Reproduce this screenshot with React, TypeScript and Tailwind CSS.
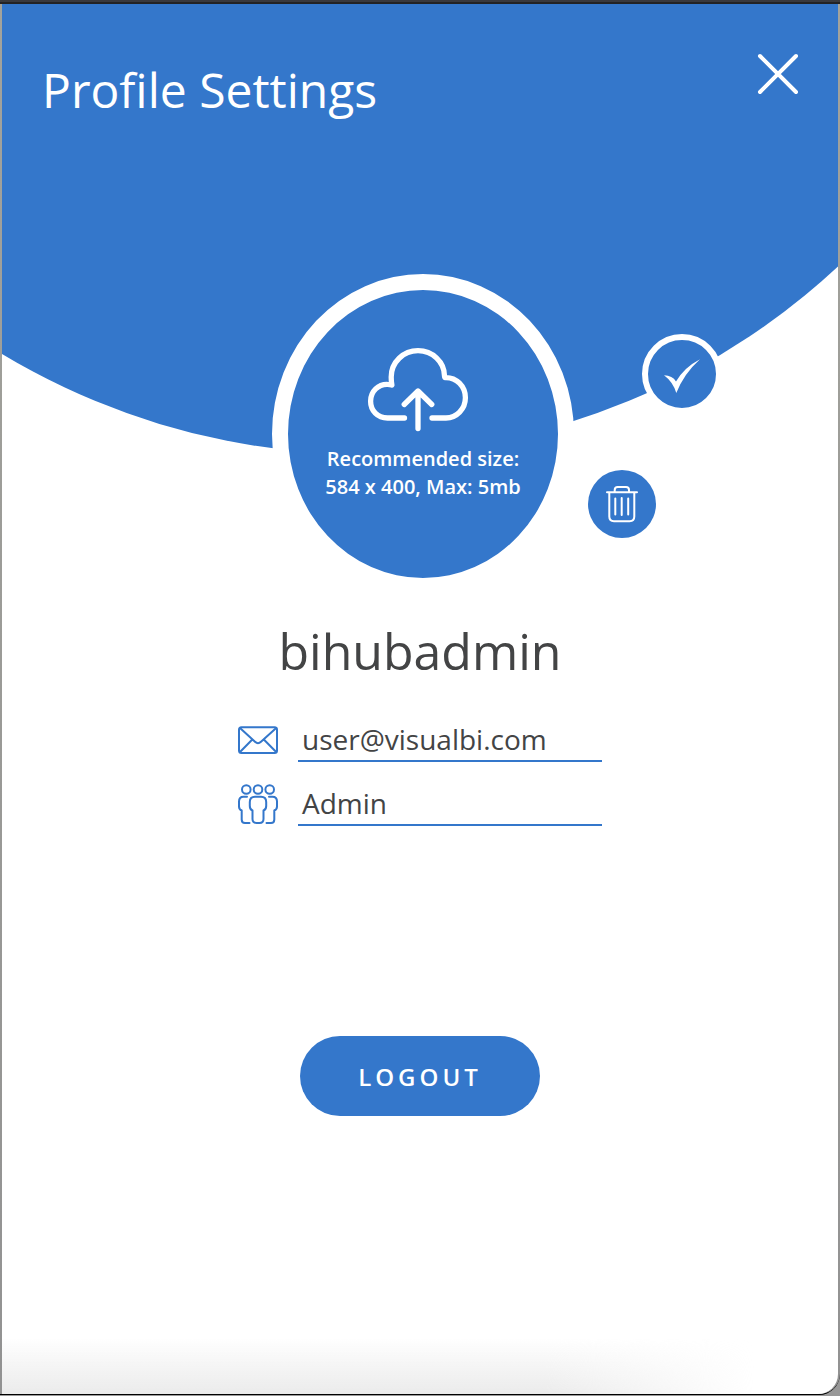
import type { ReactNode } from 'react';

function CloseIcon() {
  return (
    <svg width="44" height="44" viewBox="0 0 44 44" fill="none" stroke="#fff" strokeWidth="4" strokeLinecap="round">
      <path d="M4 4 40 40M40 4 4 40" />
    </svg>
  );
}

function CloudUploadIcon() {
  return (
    <svg width="104" height="88" viewBox="366 346 104 88" fill="none" stroke="#fff" strokeWidth="5.3" strokeLinecap="round" strokeLinejoin="round" className="block">
      <path d="M404.500 418H387.500C377.500 418 370.600 410.500 370.600 401.200C370.600 391 378.500 384 387.500 384.300Q390 384.300 391.900 385Q391.200 382 391.200 377C391.200 362 403.500 350.700 418 350.700C432.500 350.700 444.500 362 444.500 376L444.800 377.600C456.500 377 465.400 386.500 465.400 397.800C465.400 409 456.500 418 446 418H432" />
      <path d="M418 428.500V391.500M404.200 404.500 418 391 431.800 404.500" />
    </svg>
  );
}

function CheckIcon() {
  return (
    <svg width="40" height="40" viewBox="662 354 40 40" fill="#fff">
      <path d="M664 375.300Q672.500 375.500 676 381.500Q684 367.500 700 359.200Q684 373.500 676.300 393Q673 382 664 375.300Z" />
    </svg>
  );
}

function TrashIcon() {
  return (
    <svg width="34" height="40" viewBox="605 484 34 40" fill="none" stroke="#fff" strokeWidth="2" strokeLinecap="round" strokeLinejoin="round">
      <path d="M607 492.200H637M609.300 492.500V516.500Q609.300 521.200 614 521.200H629.700Q634.300 521.200 634.300 516.500V492.500M614.700 492V490Q614.700 487 617.700 487H626Q629 487 629 490V492" />
      <path d="M615.300 498.500V514.500M621.700 498V515M628.200 498.500V514.500" />
    </svg>
  );
}

function MailIcon() {
  return (
    <svg width="42" height="30" viewBox="237 725 42 30" fill="none" stroke="#3477cb" strokeWidth="2" strokeLinejoin="round" strokeLinecap="round">
      <rect x="239" y="727.200" width="38" height="25.700" rx="2.500" />
      <path d="M240 728 255 741.800Q258 744.700 261 741.800L276.200 728M240 752 251.800 740M276.200 752 264.300 740" />
    </svg>
  );
}

function PeopleIcon() {
  return (
    <svg width="42" height="42" viewBox="237 783 42 42" fill="none" stroke="#3477cb" strokeWidth="2" strokeLinejoin="round" strokeLinecap="round">
      <circle cx="246.300" cy="789.500" r="4.300" />
      <circle cx="258" cy="789.500" r="4.300" />
      <circle cx="269.700" cy="789.500" r="4.300" />
      <path d="M255 796.700H261C264.500 796.700 266.200 798.500 266.200 802V806Q266.200 809.500 263.500 810.500V819C263.500 821.500 262 823 259.500 823H256.500C254 823 252.500 821.500 252.500 819V810.500Q249.800 809.500 249.800 806V802C249.800 798.500 251.500 796.700 255 796.700Z" />
      <path d="M247 796.700H243.500C240.500 796.700 239 798.500 239 801.500V806.500Q239 809.500 241.700 810.500V819.500Q241.700 823 245 823H249.500M269 796.700H272.500C275.500 796.700 277 798.500 277 801.500V806.500Q277 809.500 274.300 810.500V819.500Q274.300 823 271 823H266.500" />
    </svg>
  );
}

function Field({ icon, value }: { icon: ReactNode; value: string }) {
  return (
    <div className="flex h-16 items-end">
      <div className="mb-px flex h-[42px] w-[42px] items-center">{icon}</div>
      <div className="ml-[19px] w-[304px] border-b-2 border-[#3477cb] pb-[2px] pl-1 text-[28px] leading-[38px]">{value}</div>
    </div>
  );
}

export default function App() {
  return (
    <div className="flex h-[1396px] w-[840px] flex-col overflow-hidden bg-[#999] font-['Open_Sans',sans-serif] text-[#434445]">
      <div className="h-1 shrink-0 border-b-2 border-[#232325] bg-[#39393d]" />
      <div className="flex h-[1391px] shrink-0 rounded-br-[21px] border-b border-black bg-gradient-to-b from-[#a3a39c] to-[#929292]">
        <main className="relative ml-0.5 h-[1390px] w-[836px] overflow-hidden rounded-br-[20px] bg-white">
          <div className="absolute -top-[946px] -left-[338px] h-[1396px] w-[1396px] rounded-full bg-[#3477cb]" />
          <div className="absolute bottom-0 left-0 h-14 w-full bg-gradient-to-b from-transparent to-[#ebebeb] [mask-image:linear-gradient(to_right,#000_65%,transparent_90%)]" />
          <div className="relative flex h-full flex-col">
            <header className="flex h-[270px] shrink-0 items-start justify-between pr-[38px] pl-10 text-white">
              <h1 className="mt-[53px] text-[48px] leading-[66px]">Profile Settings</h1>
              <button aria-label="Close" className="mt-12"><CloseIcon /></button>
            </header>
            <section className="flex h-[320px] shrink-0 pl-[270px]">
              <div className="flex h-[320px] w-[302px] shrink-0 flex-col items-center rounded-[50%] border-[16px] border-white bg-[#3477cb] pt-14 text-white">
                <div className="mr-[10px]"><CloudUploadIcon /></div>
                <p className="mt-[11px] text-center text-[20px] leading-7 font-semibold whitespace-nowrap">Recommended size:<br />584 x 400, Max: 5mb</p>
              </div>
              <div className="ml-[14px] flex flex-col gap-14 pt-[60px]">
                <button aria-label="Confirm" className="ml-[54px] flex h-20 w-20 items-center justify-center rounded-full border-[6px] border-white bg-[#3477cb]"><CheckIcon /></button>
                <button aria-label="Delete" className="flex h-[68px] w-[68px] items-center justify-center rounded-full bg-[#3477cb]"><TrashIcon /></button>
              </div>
            </section>
            <h2 className="mt-[23px] text-center text-[50px] leading-[68px]">bihubadmin</h2>
            <section className="mt-[13px] pl-[235px]">
              <Field icon={<MailIcon />} value="user@visualbi.com" />
              <Field icon={<PeopleIcon />} value="Admin" />
            </section>
            <button className="mt-[210px] flex h-20 w-60 shrink-0 items-center justify-center self-center rounded-full bg-[#3477cb] pt-0.5 text-[24px] font-semibold tracking-[4px] text-white">LOGOUT</button>
          </div>
        </main>
      </div>
    </div>
  );
}
